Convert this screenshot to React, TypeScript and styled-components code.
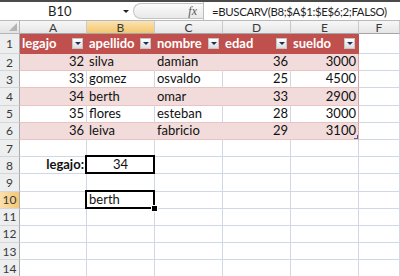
import React from 'react';
import styled, { createGlobalStyle, css } from 'styled-components';

const GlobalStyle = createGlobalStyle`
  html, body {
    margin: 0;
    padding: 0;
    background: #fff;
  }
  body {
    font-family: Lato, "Open Sans", sans-serif;
  }
`;

const Sheet = styled.div`
  width: 400px;
  height: 276px;
  overflow: hidden;
  background: #fff;
  display: flex;
  flex-direction: column;
`;

const FormulaBar = styled.div`
  height: 18px;
  border-top: 2px solid #4b4b4b;
  border-bottom: 1px solid #b9b9b9;
  display: flex;
  font-size: 13px;
  color: #1e1e1e;
`;

const NameBox = styled.div`
  width: 133px;
  flex-shrink: 0;
  display: flex;
  align-items: center;
  justify-content: space-between;
  padding: 0 4px 0 48px;
  box-sizing: border-box;
  background: #fff;
`;

const DropArrow = styled.span`
  width: 0;
  height: 0;
  border-left: 3px solid transparent;
  border-right: 3px solid transparent;
  border-top: 3px solid #222;
  margin-top: 1px;
`;

const FxArea = styled.div`
  width: 70px;
  flex-shrink: 0;
  display: flex;
  align-items: center;
  justify-content: flex-end;
  padding-right: 6px;
  box-sizing: border-box;
  background: linear-gradient(#fbfbfb, #e9e9e9);
  border: 1px solid #c3c3c3;
  border-right: none;
  border-radius: 9px 0 0 9px;
  margin: 1px 0;
`;

const FxLabel = styled.span`
  font-family: "Liberation Serif", serif;
  font-style: italic;
  font-size: 12px;
  color: #555;
`;

const FormulaInput = styled.div`
  flex: 1;
  min-width: 0;
  overflow: hidden;
  display: flex;
  align-items: center;
  padding-left: 8px;
  border-left: 1px solid #bdbdbd;
  background: #fff;
  white-space: nowrap;
  font-size: 11.4px;
  letter-spacing: -0.35px;
`;

const Gap = styled.div`
  height: 3px;
  background: #eef0f3;
`;

const Grid = styled.div`
  display: grid;
  grid-template-columns: 20px 67px 68px 68px 68px 68px 1fr;
  grid-template-rows: 13px 20px repeat(13, 17.2px);
  font-size: 13px;
`;

const Corner = styled.div`
  background: linear-gradient(#f4f4f4, #e3e3e3);
  border-right: 1px solid #b5b5b5;
  border-bottom: 1px solid #b5b5b5;
  display: flex;
  align-items: flex-end;
  justify-content: flex-end;
  padding: 0 2px 2px 0;
`;

const CornerMark = styled.span`
  width: 0;
  height: 0;
  border-left: 8px solid transparent;
  border-bottom: 8px solid #b4b4b4;
`;

const ColHead = styled.div<{ $active?: boolean }>`
  display: flex;
  align-items: center;
  justify-content: center;
  font-size: 12px;
  color: #3a3a3a;
  border-right: 1px solid #c9c9c9;
  border-bottom: 1px solid #a6a6a6;
  background: ${p => (p.$active ? 'linear-gradient(#fbe3b4, #f3c66d)' : 'linear-gradient(#f7f7f7, #e6e6e6)')};
`;

const RowHead = styled.div<{ $active?: boolean }>`
  display: flex;
  align-items: center;
  justify-content: center;
  font-size: 12px;
  color: #3a3a3a;
  border-right: 1px solid #a9a9a9;
  border-bottom: 1px solid #d6d6d6;
  background: ${p => (p.$active ? 'linear-gradient(90deg, #fbe0ad, #f4c875)' : '#eceef0')};
`;

type Kind = 'head' | 'band' | 'stripe' | 'blank';

const kindStyles: Record<Kind, ReturnType<typeof css>> = {
  head: css`
    background: #c0504d;
    color: #fff;
    font-weight: 700;
    border-bottom: 1px solid #c0504d;
    border-right: 1px solid #c0504d;
  `,
  band: css`
    background: #f2dcdb;
    border-bottom: 1px solid #e8c3c2;
    border-right: 1px solid #f2dcdb;
  `,
  stripe: css`
    background: #fff;
    border-bottom: 1px solid #e8c3c2;
    border-right: 1px solid #d0d7e5;
  `,
  blank: css`
    background: #fff;
    border-bottom: 1px solid #d0d7e5;
    border-right: 1px solid #d0d7e5;
  `,
};

const Cell = styled.div<{
  $kind: Kind;
  $align?: 'left' | 'right' | 'center';
  $bold?: boolean;
  $edge?: boolean;
  $boxed?: boolean;
  $handle?: boolean;
  $resize?: boolean;
}>`
  position: relative;
  display: flex;
  align-items: flex-end;
  justify-content: ${p => (p.$align === 'right' ? 'flex-end' : p.$align === 'center' ? 'center' : 'space-between')};
  padding: 0 2px 1px 2px;
  color: #111;
  white-space: nowrap;
  min-width: 0;
  ${p => kindStyles[p.$kind]}
  ${p => p.$bold && 'font-weight: 700;'}
  ${p => p.$edge && 'border-right-color: #dba3a1;'}
  ${p =>
    p.$boxed &&
    css`
      &::before {
        content: '';
        position: absolute;
        left: -2px;
        top: -2px;
        right: -1px;
        bottom: -1px;
        border: 2px solid #000;
        pointer-events: none;
      }
    `}
  ${p =>
    p.$handle &&
    css`
      &::after {
        content: '';
        position: absolute;
        right: -4px;
        bottom: -4px;
        width: 5px;
        height: 5px;
        background: #000;
        border: 1px solid #fff;
        z-index: 2;
      }
    `}
  ${p =>
    p.$resize &&
    css`
      &::after {
        content: '';
        position: absolute;
        right: 0;
        bottom: 0;
        width: 3px;
        height: 3px;
        border-right: 1px solid #5b5ba8;
        border-bottom: 1px solid #5b5ba8;
      }
    `}
`;

const HeadCell = styled(Cell)`
  align-items: center;
  padding-right: 3px;
`;

const FilterButton = styled.span`
  width: 11px;
  height: 11px;
  box-sizing: border-box;
  border: 1px solid #c5c5c5;
  background: linear-gradient(#ffffff, #dcdcdc);
  display: flex;
  align-items: center;
  justify-content: center;
  flex-shrink: 0;
  &::after {
    content: '';
    width: 0;
    height: 0;
    border-left: 3px solid transparent;
    border-right: 3px solid transparent;
    border-top: 3px solid #1f2f55;
  }
`;

const columns = ['A', 'B', 'C', 'D', 'E', 'F'];
const headers = ['legajo', 'apellido', 'nombre', 'edad', 'sueldo'];
const records = [
  ['32', 'silva', 'damian', '36', '3000'],
  ['33', 'gomez', 'osvaldo', '25', '4500'],
  ['34', 'berth', 'omar', '33', '2900'],
  ['35', 'flores', 'esteban', '28', '3000'],
  ['36', 'leiva', 'fabricio', '29', '3100'],
];
const numeric = [true, false, false, true, true];

const App: React.FC = () => {
  const renderRow = (r: number) => {
    const cells: React.ReactNode[] = [];
    if (r === 1) {
      headers.forEach((h, i) => {
        cells.push(
          <HeadCell key={i} $kind="head">
            <span>{h}</span>
            <FilterButton />
          </HeadCell>
        );
      });
      cells.push(<Cell key="f" $kind="blank" />);
    } else if (r <= 6) {
      const rec = records[r - 2];
      const kind: Kind = r % 2 === 0 ? 'band' : 'stripe';
      rec.forEach((v, i) => {
        cells.push(
          <Cell
            key={i}
            $kind={kind}
            $align={numeric[i] ? 'right' : 'left'}
            $edge={i === 4}
            $resize={r === 6 && i === 4}
          >
            {v}
          </Cell>
        );
      });
      cells.push(<Cell key="f" $kind="blank" />);
    } else {
      columns.forEach((c, i) => {
        if (r === 8 && c === 'A') {
          cells.push(<Cell key={i} $kind="blank" $align="right" $bold>legajo:</Cell>);
        } else if (r === 8 && c === 'B') {
          cells.push(<Cell key={i} $kind="blank" $align="center" $boxed>34</Cell>);
        } else if (r === 10 && c === 'B') {
          cells.push(<Cell key={i} $kind="blank" $align="left" $boxed $handle>berth</Cell>);
        } else {
          cells.push(<Cell key={i} $kind="blank" />);
        }
      });
    }
    return (
      <React.Fragment key={r}>
        <RowHead $active={r === 10}>{r}</RowHead>
        {cells}
      </React.Fragment>
    );
  };

  return (
    <>
      <GlobalStyle />
      <Sheet>
        <FormulaBar>
          <NameBox>
            <span>B10</span>
            <DropArrow />
          </NameBox>
          <FxArea>
            <FxLabel>fx</FxLabel>
          </FxArea>
          <FormulaInput>=BUSCARV(B8;$A$1:$E$6;2;FALSO)</FormulaInput>
        </FormulaBar>
        <Gap />
        <Grid>
          <Corner>
            <CornerMark />
          </Corner>
          {columns.map(c => (
            <ColHead key={c} $active={c === 'B'}>{c}</ColHead>
          ))}
          {Array.from({ length: 14 }, (_, i) => renderRow(i + 1))}
        </Grid>
      </Sheet>
    </>
  );
};

export default App;
